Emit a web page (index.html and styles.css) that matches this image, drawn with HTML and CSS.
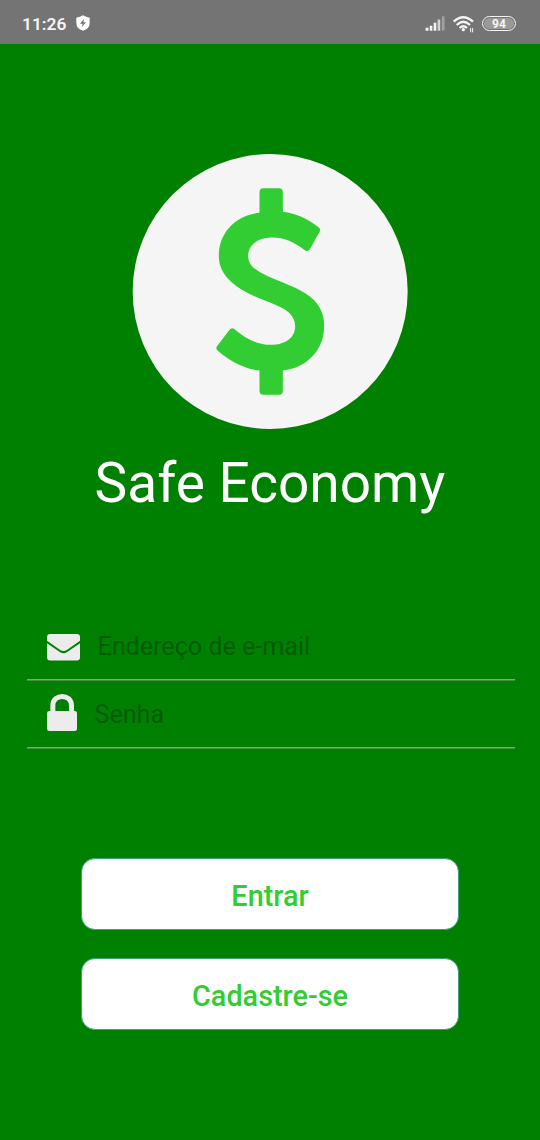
FILE: index.html
```html
<!DOCTYPE html>
<html lang="pt-BR">
<head>
<meta charset="utf-8">
<title>Safe Economy</title>
<link rel="stylesheet" href="styles.css">
</head>
<body>
<header class="status">
  <span class="clock">11:26</span>
  <svg class="shield" viewBox="0 0 42 48"><path fill="#fff" d="M21 1Q30 6 41 8V23Q41 41 21 47Q1 41 1 23V8Q12 6 21 1Z"/><path fill="#747474" d="M24 11L12 26H20L17 37L30 22H22Z"/></svg>
  <svg class="signal" viewBox="0 0 60 46"><path fill="#f5f5f5" d="M1 36h9v9H1zM14 30h8v15h-8zM26 21h8v24h-8z"/><path fill="#d5d5d5" d="M38 11h8v34h-8z"/><path fill="#a2a2a2" d="M51 1h8v44h-8z"/></svg>
  <svg class="wifi" viewBox="0 0 64 50"><g fill="none" stroke="#f5f5f5" stroke-width="7"><path d="M2 17Q31-10 60 17"/><path d="M11 27Q31 8 51 27"/><path d="M20 36Q31 26 42 36"/></g><circle cx="31" cy="41" r="5" fill="#f5f5f5"/><path stroke="#f5f5f5" stroke-width="3" d="M53 36v13M59 36v13"/></svg>
  <span class="battery"><span class="level">94</span></span>
</header>
<main class="login">
  <svg class="logo" viewBox="37.5 41.5 825 825">
    <circle cx="449" cy="454" r="412.5" fill="#f5f5f5"/>
    <path transform="translate(-1 0)" fill="#32cd32" d="M418 218V156Q418 144 430 144H476Q488 144 488 156V215C528 220 565 237 596 262Q602 267 599 273L570 326Q564 336 555 331C523 306 492 292 458 292C413 292 384 314 384 346C384 377 407 391 440 407C484 428 532 440 570 470C600 494 612 522 612 558C612 628 562 682 488 691V752Q488 764 476 764H430Q418 764 418 752V691C370 686 328 662 292 631Q286 625 290 619L327 570Q334 561 343 567C380 598 414 614 452 614C496 614 525 592 525 558C525 527 501 509 470 496C423 476 370 460 332 424C307 400 296 378 296 346C296 280 344 226 418 218Z"/>
  </svg>
  <h1 class="title">Safe Economy</h1>
  <form class="form">
    <label class="field email">
      <svg class="mail" viewBox="0 0 100 80"><path fill="#ececec" d="M0 20V10Q0 0 10 0H90Q100 0 100 10V20L60 48Q50 55 40 48Z"/><path fill="#ececec" d="M0 28L40 55Q50 61 60 55L100 28V70Q100 80 90 80H10Q0 80 0 70Z"/></svg>
      <span class="hint">Endereço de e-mail</span>
    </label>
    <label class="field password">
      <svg class="lock" viewBox="0 0 90 111"><path fill="none" stroke="#ececec" stroke-width="15" d="M17.500 54V35C17.500-2 73.500-2 73.500 35V54"/><rect y="51" width="90" height="60" rx="7" fill="#ececec"/></svg>
      <span class="hint">Senha</span>
    </label>
  </form>
  <div class="actions">
    <button class="button">Entrar</button>
    <button class="button">Cadastre-se</button>
  </div>
</main>
</body>
</html>
```
FILE: styles.css
```css
* { box-sizing: border-box; }
body {
  margin: 0;
  height: 1140px;
  background: #008000;
  font-family: Roboto, sans-serif;
  overflow: hidden;
}
svg { display: block; flex: none; overflow: visible; }
.status {
  display: flex;
  align-items: center;
  height: 44px;
  padding: 4px 24px 0 22px;
  background: #747474;
  color: #f5f5f5;
}
.clock { width: 54px; font-size: 17.400px; font-weight: 600; line-height: 20px; }
.shield { width: 14px; height: 16px; margin-bottom: 2px; }
.signal { width: 20px; height: 15px; margin: 0 0 1px auto; }
.wifi { width: 21.300px; height: 16.700px; margin-left: 8px; }
.battery {
  display: flex;
  width: 34px;
  height: 15px;
  margin: 0 0 1px 7.700px;
  padding: 1px;
  border: 1.500px solid #f5f5f5;
  border-radius: 8px;
}
.level {
  flex: 1;
  border-radius: 6px;
  background: #999;
  font-size: 12px;
  font-weight: 700;
  line-height: 12px;
  text-align: center;
}
.login { display: flex; flex-direction: column; align-items: center; padding-top: 110px; }
.logo { width: 275px; height: 275px; }
.title {
  margin: 22px 0 0;
  color: #fff;
  font-size: 55px;
  font-weight: 400;
  line-height: 64px;
  white-space: nowrap;
}
.form { width: 488px; margin: 97px 0 0 1px; }
.field {
  display: flex;
  align-items: center;
  height: 68px;
  padding: 2px 0 0 20px;
  border-bottom: 1px solid #7fa97f;
  box-shadow: 0 1px 0 #469046;
}
.mail { width: 33px; height: 26.500px; margin: 1.500px 18px 0 0; }
.lock { width: 30px; height: 37px; margin: 0 18px 4px 0; }
.hint { color: #005c00; font-size: 25.100px; line-height: 30px; }
.actions { display: flex; flex-direction: column; gap: 28px; width: 378px; margin-top: 110px; }
.button {
  height: 72px;
  padding: 4px 0 0;
  border: 1px solid #3fa27f;
  border-radius: 14px;
  background: #fff;
  color: #32cd32;
  font: 500 28.800px/32px Roboto, sans-serif;
}
```
